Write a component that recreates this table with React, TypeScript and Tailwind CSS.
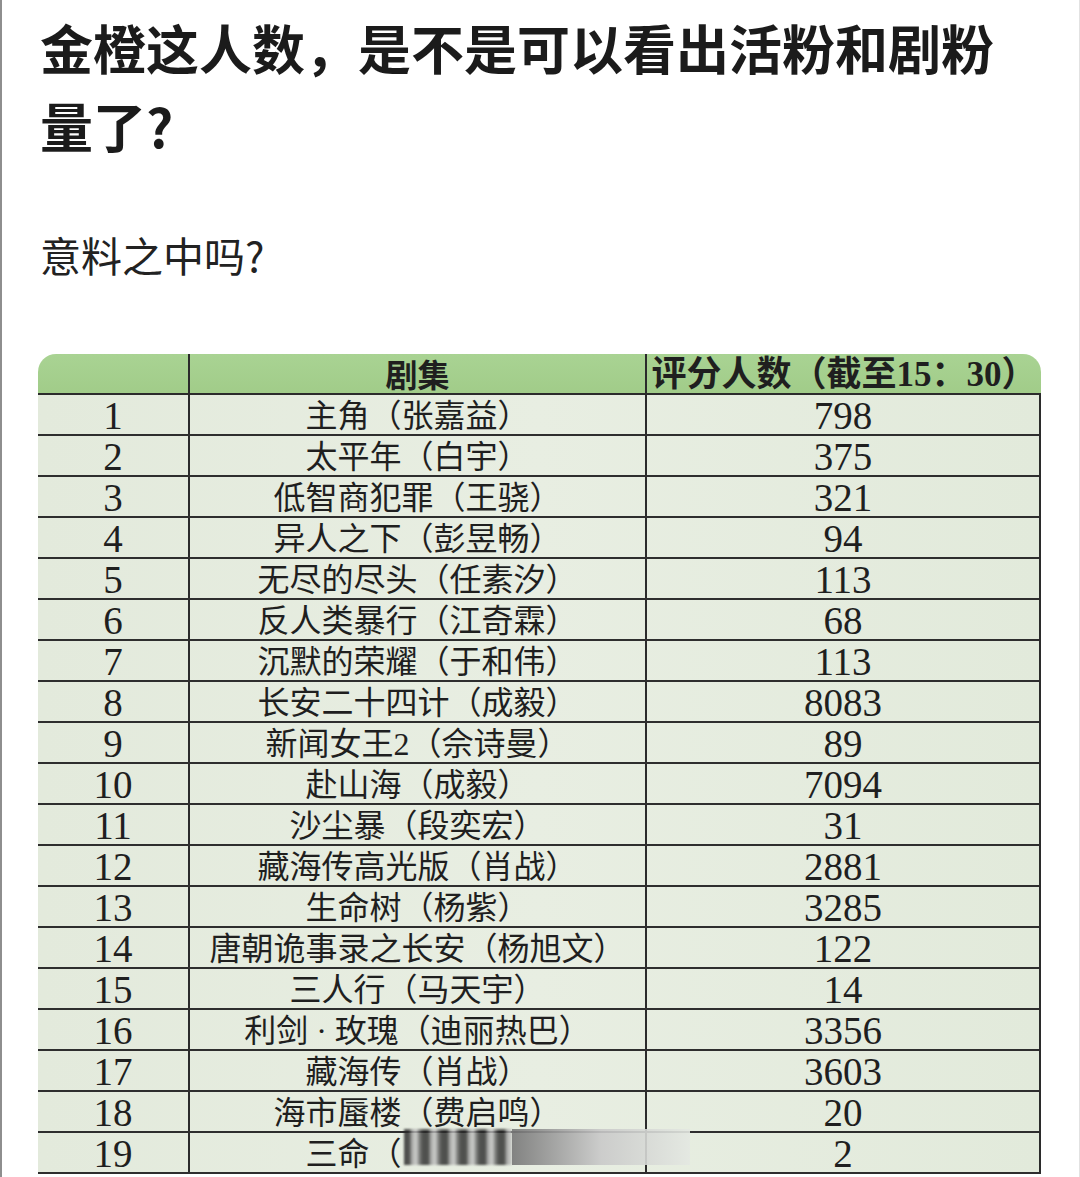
import React from 'react';

const rows: [string, string, string][] = [
  ['1', '主角（张嘉益）', '798'],
  ['2', '太平年（白宇）', '375'],
  ['3', '低智商犯罪（王骁）', '321'],
  ['4', '异人之下（彭昱畅）', '94'],
  ['5', '无尽的尽头（任素汐）', '113'],
  ['6', '反人类暴行（江奇霖）', '68'],
  ['7', '沉默的荣耀（于和伟）', '113'],
  ['8', '长安二十四计（成毅）', '8083'],
  ['9', '新闻女王2（佘诗曼）', '89'],
  ['10', '赴山海（成毅）', '7094'],
  ['11', '沙尘暴（段奕宏）', '31'],
  ['12', '藏海传高光版（肖战）', '2881'],
  ['13', '生命树（杨紫）', '3285'],
  ['14', '唐朝诡事录之长安（杨旭文）', '122'],
  ['15', '三人行（马天宇）', '14'],
  ['16', '利剑 · 玫瑰（迪丽热巴）', '3356'],
  ['17', '藏海传（肖战）', '3603'],
  ['18', '海市蜃楼（费启鸣）', '20'],
];

const serif = 'font-["Liberation_Serif","Noto_Sans_CJK_SC",serif]';

export default function App() {
  return (
    <div className="w-[1080px] h-[1177px] bg-white border-l-2 border-r border-l-[#8e8e8e] border-r-[#e2e2e2] overflow-hidden font-['Noto_Sans_CJK_SC',sans-serif]">
      {/* Post text */}
      <div className="pl-[38px] pt-[8px]">
        <h1 className="w-[975px] text-[53px] leading-[78px] font-bold text-[#1b1b1b]">
          金橙这人数，是不是可以看出活粉和剧粉量了?
        </h1>
        <p className="mt-[60px] text-[41px] leading-[60px] text-[#222]">意料之中吗?</p>
      </div>

      {/* Table screenshot */}
      <div className={`mt-[70px] ml-[36px] w-[1003px] ${serif} text-[#1f1f1f]`}>
        <div className="flex h-[41px] bg-gradient-to-b from-[#a9d393] to-[#a1cc89] rounded-t-[18px] border-b-2 border-[#2b2b2b]">
          <div className="w-[152px] border-r-2 border-[#2b2b2b]" />
          <div className="w-[457px] border-r-2 border-[#2b2b2b] flex items-center justify-center pt-[4px] text-[32px] font-bold">
            剧集
          </div>
          <div className="flex-1 flex items-center justify-center pt-[4px] text-[35px] font-bold whitespace-nowrap">
            评分人数（截至15：30）
          </div>
        </div>

        <div className="border-r-2 border-[#2b2b2b] bg-gradient-to-r from-[#e3eadc] via-[#e8eee2] to-[#e2eadb]">
          {rows.map(([n, title, count]) => (
            <div key={n} className="flex h-[41px] border-b-2 border-[#2e2e2e]">
              <div className="w-[152px] border-r-2 border-[#2b2b2b] flex items-center justify-center pt-[2px] text-[39px] leading-none">
                {n}
              </div>
              <div className="w-[457px] border-r-2 border-[#2b2b2b] flex items-center justify-center pt-[2px] text-[32px] leading-none whitespace-nowrap">
                {title}
              </div>
              <div className="flex-1 flex items-center justify-center pt-[2px] text-[39px] leading-none">{count}</div>
            </div>
          ))}

          <div className="relative flex h-[41px] border-b-2 border-[#2e2e2e]">
            <div className="w-[152px] border-r-2 border-[#2b2b2b] flex items-center justify-center pt-[2px] text-[39px] leading-none">
              19
            </div>
            <div className="w-[457px] border-r-2 border-[#2b2b2b] flex items-center justify-center pt-[2px] text-[32px] leading-none whitespace-nowrap">
              三命（<span className="inline-block w-[128px]" />
            </div>
            <div className="flex-1 flex items-center justify-center pt-[2px] text-[39px] leading-none">2</div>

            {/* blurred watermark smear */}
            <div className="absolute left-[366px] top-[-4px] h-[36px] w-[108px] opacity-80 bg-[repeating-linear-gradient(90deg,#2a2a2a_0px,#2a2a2a_5px,#9a9a9a_8px,#c8c8c8_12px,#5a5a5a_16px,#2a2a2a_19px)] blur-[1px]" />
            <div className="absolute left-[474px] top-[-4px] h-[36px] w-[178px] bg-gradient-to-r from-[#777] via-[#c9c9c9] to-[#e4e8e2] opacity-90" />
          </div>
        </div>
      </div>
    </div>
  );
}
